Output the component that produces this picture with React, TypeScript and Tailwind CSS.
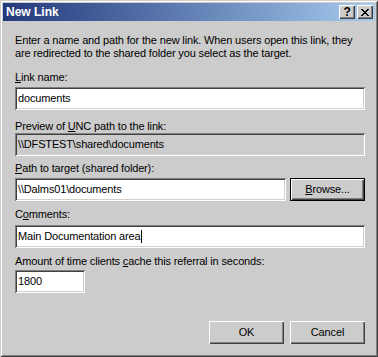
import React from 'react';

const sunken =
  'shadow-[inset_1px_1px_0_#808080,inset_-1px_-1px_0_#ffffff,inset_2px_2px_0_#404040,inset_-2px_-2px_0_#d4d0c8]';
const raised =
  'shadow-[inset_1px_1px_0_#ffffff,inset_-1px_-1px_0_#404040,inset_-2px_-2px_0_#808080]';

const CloseGlyph: React.FC = () => (
  <svg width="8" height="7" viewBox="0 0 8 7" shapeRendering="crispEdges">
    {[
      [0, 0, 2], [6, 0, 2],
      [1, 1, 2], [5, 1, 2],
      [2, 2, 4],
      [3, 3, 2],
      [2, 4, 4],
      [1, 5, 2], [5, 5, 2],
      [0, 6, 2], [6, 6, 2],
    ].map(([x, y, w], i) => (
      <rect key={i} x={x} y={y} width={w} height={1} fill="#000" />
    ))}
  </svg>
);

const Field: React.FC<{ children?: React.ReactNode; className?: string; grey?: boolean }> = ({
  children,
  className = '',
  grey,
}) => (
  <div
    className={`h-[23px] flex items-center pl-[3px] ${grey ? 'bg-[#cccccc]' : 'bg-white'} ${sunken} ${className}`}
  >
    {children}
  </div>
);

const Button: React.FC<{ children: React.ReactNode; className?: string }> = ({ children, className = '' }) => (
  <div
    className={`w-[75px] h-[23px] flex items-center justify-center bg-[#cccccc] ${className}`}
  >
    {children}
  </div>
);

export default function App() {
  return (
    <div
      className="w-[378px] h-[357px] bg-[#cccccc] p-[3px] flex flex-col text-[11px] leading-[13px] tracking-[-0.15px] text-black font-['Liberation_Sans',Arial,sans-serif] shadow-[inset_1px_1px_0_#d4d0c8,inset_-1px_-1px_0_#404040,inset_2px_2px_0_#ffffff,inset_-2px_-2px_0_#808080]"
    >
      {/* Title bar */}
      <div className="h-[18px] flex items-center bg-linear-to-r from-[#24397b] to-[#a8cbee] pl-[3px] pr-[2px]">
        <span className="font-bold text-white text-[12px] tracking-normal">New Link</span>
        <div className="ml-auto flex gap-[2px]">
          <div className={`w-[16px] h-[14px] bg-[#cccccc] flex items-center justify-center font-bold text-[12px] ${raised}`}>
            ?
          </div>
          <div className={`w-[16px] h-[14px] bg-[#cccccc] flex items-center justify-center ${raised}`}>
            <CloseGlyph />
          </div>
        </div>
      </div>

      <div className="flex flex-col pl-[12px] pr-[10px]">
        <p className="mt-[13px]">
          Enter a name and path for the new link. When users open this link, they
          <br />
          are redirected to the shared folder you select as the target.
        </p>

        <div className="mt-[11px]">
          <u>L</u>ink name:
        </div>
        <Field className="mt-[3px]">documents</Field>

        <div className="mt-[10px]">
          Preview of <u>U</u>NC path to the link:
        </div>
        <Field grey className="mt-0">\\DFSTEST\shared\documents</Field>

        <div className="mt-[6px]">
          <u>P</u>ath to target (shared folder):
        </div>
        <div className="mt-[3px] flex gap-[4px]">
          <Field className="flex-1">\\Dalms01\documents</Field>
          <Button className="shadow-[inset_0_0_0_1px_#000000,inset_2px_2px_0_#ffffff,inset_-2px_-2px_0_#404040,inset_-3px_-3px_0_#808080]">
            <span>
              <u>B</u>rowse...
            </span>
          </Button>
        </div>

        <div className="mt-[7px]">
          C<u>o</u>mments:
        </div>
        <Field className="mt-[4px]">
          Main Documentation area
          <span className="inline-block w-px h-[13px] bg-black" />
        </Field>

        <div className="mt-[7px]">
          Amount of time clients <u>c</u>ache this referral in seconds:
        </div>
        <Field className="mt-[2px] w-[70px]">1800</Field>

        <div className="mt-[28px] flex justify-end gap-[6px]">
          <Button className={raised}>OK</Button>
          <Button className={raised}>Cancel</Button>
        </div>
      </div>
    </div>
  );
}
